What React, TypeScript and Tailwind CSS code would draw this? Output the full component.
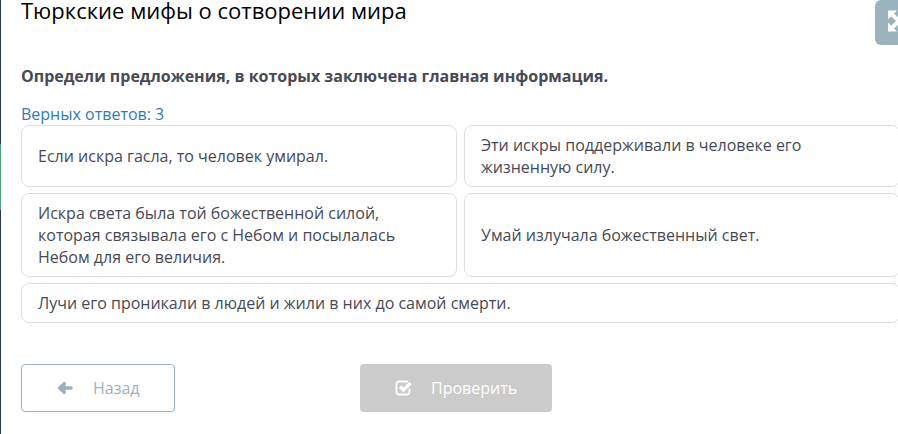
const ArrowLeftIcon = () => (
  <svg className="mr-5 h-4 w-4" viewBox="0 0 16 16" fill="currentColor" stroke="currentColor">
    <path d="M7.5 3 2 8l5.5 5z" strokeWidth="2.5" strokeLinejoin="round" />
    <path d="M6 8h8" fill="none" strokeWidth="3.6" strokeLinecap="round" />
  </svg>
);

const CheckIcon = () => (
  <svg className="mr-[18px] h-[18px] w-[18px]" viewBox="0 0 18 18" fill="none" stroke="currentColor">
    <path
      d="M14.5 10.5V13a2.5 2.5 0 0 1-2.5 2.5H4A2.5 2.5 0 0 1 1.5 13V5A2.500 2.500 0 0 1 4 2.500h8.500"
      strokeWidth="1.8"
      strokeLinecap="round"
    />
    <path d="m5 7.500 3.500 3.500 7-7" strokeWidth="3.2" />
  </svg>
);

const ExpandIcon = () => (
  <svg className="h-[22px] w-[22px]" viewBox="0 0 22 22" fill="currentColor">
    <path d="M0 .5h9l-9 9zM22 .5v9l-9-9zM0 21.500v-9l9 9zM22 21.500h-9l9-9z" />
    <path d="m3 3.500 16 15M19 3.500l-16 15" stroke="currentColor" strokeWidth="4" />
  </svg>
);

const App = () => {
  const answers = [
    { id: 1, text: "Если искра гасла, то человек умирал." },
    { id: 2, text: "Эти искры поддерживали в человеке его жизненную силу." },
    {
      id: 3,
      text: "Искра света была той божественной силой, которая связывала его с Небом и посылалась Небом для его величия.",
    },
    { id: 4, text: "Умай излучала божественный свет." },
    {
      id: 5,
      text: "Лучи его проникали в людей и жили в них до самой смерти.",
      wide: true,
    },
  ];

  return (
    <div className="relative flex min-h-screen overflow-hidden bg-white font-['Open_Sans',sans-serif] text-base text-[#474a54]">
      {/* Sidebar edge */}
      <div className="flex w-px shrink-0 flex-col bg-[#2c3844]">
        <div className="mt-36 h-[66px] bg-[#4f9c78]"></div>
      </div>

      <main className="-mr-0.5 min-w-0 flex-1 pl-5">
        <h1 className="h-16 text-[22px] leading-5 text-black">
          Тюркские мифы о сотворении мира
        </h1>
        <p className="font-bold leading-6">
          Определи предложения, в которых заключена главная информация.
        </p>
        <p className="mt-4 leading-[21px] text-[#337ab7]">Верных ответов: 3</p>

        {/* Answers */}
        <div className="grid grid-cols-2 gap-x-[7px] gap-y-1.5">
          {answers.map((answer) => (
            <button
              key={answer.id}
              type="button"
              className={`rounded-lg border border-[#dfdfdf] px-4 py-2 text-left leading-[22px] ${
                answer.wide ? "col-span-2" : "pr-12"
              }`}
            >
              {answer.text}
            </button>
          ))}
        </div>

        {/* Actions */}
        <div className="mt-[41px] flex">
          <button
            type="button"
            className="flex h-12 w-[154px] items-center rounded border border-[#9db2bd] pl-[35px] text-[#9db2bd]"
          >
            <ArrowLeftIcon />
            Назад
          </button>
          <button
            type="button"
            className="ml-[185px] flex h-12 w-48 items-center rounded bg-[#cbcbcb] pl-[35px] text-white"
          >
            <CheckIcon />
            Проверить
          </button>
        </div>
      </main>

      {/* Fullscreen toggle */}
      <button
        type="button"
        aria-label="Во весь экран"
        className="absolute -right-6 top-0 flex h-[45px] w-[47px] justify-center rounded-md bg-[#9bb3bd] pt-[10px] text-white"
      >
        <ExpandIcon />
      </button>
    </div>
  );
};

export default App;
